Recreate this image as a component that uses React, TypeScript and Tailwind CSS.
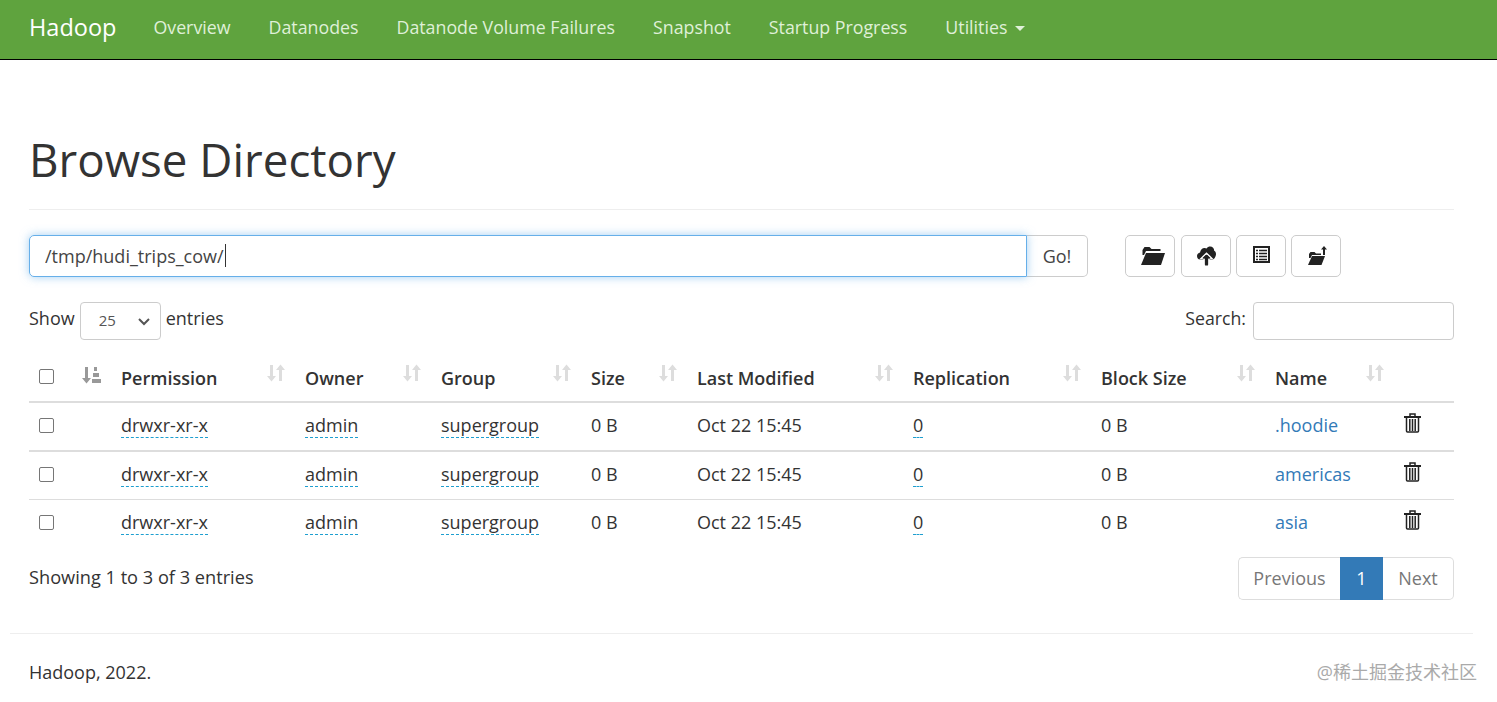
const navItems = ["Overview", "Datanodes", "Datanode Volume Failures", "Snapshot", "Startup Progress"];

const columns = [
  { label: "Permission", width: "w-[184px]" },
  { label: "Owner", width: "w-[136px]" },
  { label: "Group", width: "w-[150px]" },
  { label: "Size", width: "w-[106px]" },
  { label: "Last Modified", width: "w-[216px]" },
  { label: "Replication", width: "w-[188px]" },
  { label: "Block Size", width: "w-[174px]" },
  { label: "Name", width: "w-[129px]" },
];

const rows = [
  { name: ".hoodie", line: "h-[49px] border-b-2", pad: "pb-[3px]" },
  { name: "americas", line: "h-[48px] border-b", pad: "pb-[1px]" },
  { name: "asia", line: "h-[48px]", pad: "pb-[1px]" },
];

function FolderOpenIcon() {
  return (
    <svg width="24" height="18" viewBox="0 0 24 18" className="ml-[5px] fill-[#222]">
      <path d="M1.500 8V3l2-3h5l2 2h9v2H5L3 8z" />
      <path d="M5 6h19l-4 12H0z" />
    </svg>
  );
}

function CloudUploadIcon() {
  return (
    <svg width="19" height="22" viewBox="0 0 20 22">
      <path
        className="fill-[#222]"
        d="M4 15C1.500 15 0 13.200 0 11c0-2 1.400-3.500 3.200-3.800C3.600 4.500 5.500 2.500 8 2.500c.8 0 1.500.2 2.100.5C11 1.500 12.500 1 13.800 1c2.600 0 4.300 2 4.300 4.400 1.200.7 1.900 2 1.900 3.400 0 2.900-2 6.200-4.500 6.200z"
      />
      <path className="fill-[#222] stroke-white" strokeWidth="1.500" d="M10 8l6 6h-3.500v7h-5v-7H4z" />
      <path className="fill-[#222]" d="M10 9.500l4 4h-2.500V21h-3v-7.500H6z" />
    </svg>
  );
}

function ListAltIcon() {
  return (
    <svg width="17" height="17" viewBox="0 0 17 17" className="mb-[3px]">
      <rect width="17" height="17" className="fill-[#222]" />
      <rect x="2" y="2" width="13" height="13" className="fill-white" />
      <path className="stroke-[#222]" strokeWidth="1.500" d="M3 4.500h2m1 0h8M3 7.500h2m1 0h8M3 10.500h2m1 0h8M3 13.500h2m1 0h8" />
    </svg>
  );
}

function FolderUploadIcon() {
  return (
    <svg width="20" height="20" viewBox="0 0 20 20" className="ml-[3px] fill-[#222]">
      <path d="M1 12V8l1.500-2h4l1.500 1.500h5V9H4l-1.500 3z" />
      <path d="M4 10h13l-3.500 9H0z" />
      <path d="M16 0l3 3.500h-2V9h-2V3.500h-2z" />
    </svg>
  );
}

function TrashIcon() {
  return (
    <svg width="17" height="20" viewBox="0 0 17 20" className="mb-[7px] stroke-[#222] fill-none">
      <path strokeWidth="1.500" d="M6 3V1h5v2" />
      <path strokeWidth="2" d="M0 4h17" />
      <path strokeWidth="1.500" d="M2.500 5v13c0 .6.400 1 1 1h10c.6 0 1-.4 1-1V5" />
      <path strokeWidth="1.500" d="M5.800 6v12M8.500 6v12M11.200 6v12" />
    </svg>
  );
}

function SortIcon() {
  return (
    <svg width="18" height="18" viewBox="0 0 18 18" className="mb-[6px] fill-[#dddddd]">
      <path d="M3 1h3v11h3l-4.500 5.500L0 12h3z" />
      <path d="M12 17h3V6h3L13.500.5 9 6h3z" />
    </svg>
  );
}

function SortActiveIcon() {
  return (
    <svg width="19" height="18" viewBox="0 0 19 18" className="mb-[2px] fill-[#999]">
      <path d="M3 1h3v11h3l-4.500 5.500L0 12h3z" />
      <path d="M12 1h3v4h-3zM11 7h6v4h-6zM10 13h9v4h-9z" />
    </svg>
  );
}

function Checkbox() {
  return <input type="checkbox" className="m-0 block h-[15px] w-[15px] appearance-none rounded-[2px] border border-[#767676] bg-white" />;
}

function Dashed({ children }: { children: React.ReactNode }) {
  return <span className="inline-block border-b border-dashed border-b-[#1e9fd0] leading-[23px]">{children}</span>;
}

export default function App() {
  return (
    <div className="h-[702px] overflow-hidden bg-white font-['Open_Sans','Noto_Sans_CJK_SC',sans-serif] text-[18px] text-[#333]">
      <nav className="flex h-[60px] items-center border-b border-black bg-[#5fa33e] pb-[4px] pl-[29px] text-[17.8px]">
        <a className="mr-[37px] text-[23.5px] text-white">Hadoop</a>
        <ul className="flex items-center gap-[38px] text-[#dff0d8]">
          {navItems.map((item) => (
            <li key={item}>{item}</li>
          ))}
          <li className="flex items-center gap-[8px]">
            Utilities
            <span className="mt-[2px] border-x-[5px] border-t-[5px] border-x-transparent border-t-[#dff0d8]" />
          </li>
        </ul>
      </nav>

      <main className="pl-[29px] pr-[43px]">
        <h1 className="border-b border-[#eee] pb-[15px] pt-[64px] text-[45.7px] leading-[70px] text-[#333]">Browse Directory</h1>

        <div className="mt-[25px] flex h-[42px] items-stretch">
          <div className="relative w-[998px]">
            <input
              readOnly
              value="/tmp/hudi_trips_cow/"
              className="h-full w-full rounded-l-[5px] border border-[#66afe9] pl-[15px] text-[18px] text-[#444] shadow-[0_0_10px_rgba(102,175,233,0.6)] outline-none"
            />
            <span className="absolute left-[196px] top-[9px] h-[23px] w-px bg-[#333]" />
          </div>
          <button className="w-[61px] rounded-r-[5px] border border-l-0 border-[#ccc] text-[#444]">Go!</button>
          <div className="ml-[37px] flex gap-[5px]">
            <button className="flex w-[50px] items-center justify-center rounded-[5px] border border-[#ccc]">
              <FolderOpenIcon />
            </button>
            <button className="ml-px flex w-[50px] items-center justify-center rounded-[5px] border border-[#ccc]">
              <CloudUploadIcon />
            </button>
            <button className="flex w-[50px] items-center justify-center rounded-[5px] border border-[#ccc]">
              <ListAltIcon />
            </button>
            <button className="flex w-[50px] items-center justify-center rounded-[5px] border border-[#ccc]">
              <FolderUploadIcon />
            </button>
          </div>
        </div>

        <div className="mt-[24px] flex h-[39px] items-center justify-between">
          <div className="flex items-center">
            <span className="mb-[4px]">Show</span>
            <div className="relative mx-[5px] h-[38px] w-[81px]">
              <select className="h-full w-full appearance-none rounded-[4px] border border-[#ccc] bg-white pl-[18px] text-[15px] text-[#555]">
                <option>25</option>
              </select>
              <svg width="12" height="8" viewBox="0 0 12 8" className="absolute right-[11px] top-[16px] fill-none stroke-[#555]" strokeWidth="2">
                <path d="M1 1l5 5 5-5" />
              </svg>
            </div>
            <span className="mb-[4px]">entries</span>
          </div>
          <div className="flex items-center gap-[7px]">
            <span className="mb-[4px] text-[17.7px]">Search:</span>
            <input className="h-[38px] w-[201px] rounded-[4px] border border-[#ccc]" />
          </div>
        </div>

        <table className="mt-[11px] w-full table-fixed border-collapse">
          <thead>
            <tr className="h-[51px] border-b-2 border-[#ddd] text-left">
              <th className="w-[45px] pl-[10px] font-normal">
                <Checkbox />
              </th>
              <th className="w-[39px] pl-[8px] font-normal">
                <SortActiveIcon />
              </th>
              {columns.map((col) => (
                <th key={col.label} className={`${col.width} px-[8px] font-semibold`}>
                  <div className="flex items-center justify-between pr-[4px]">
                    <span className="mt-[5px]">{col.label}</span>
                    <SortIcon />
                  </div>
                </th>
              ))}
              <th />
            </tr>
          </thead>
          <tbody>
            {rows.map((row) => (
              <tr key={row.name} className={`border-[#ddd] ${row.line}`}>
                <td className={`pl-[10px] ${row.pad}`}>
                  <Checkbox />
                </td>
                <td />
                <td className={`px-[8px] ${row.pad}`}>
                  <Dashed>drwxr-xr-x</Dashed>
                </td>
                <td className={`px-[8px] ${row.pad}`}>
                  <Dashed>admin</Dashed>
                </td>
                <td className={`px-[8px] ${row.pad}`}>
                  <Dashed>supergroup</Dashed>
                </td>
                <td className={`px-[8px] ${row.pad}`}>0 B</td>
                <td className={`px-[8px] ${row.pad}`}>Oct 22 15:45</td>
                <td className={`px-[8px] ${row.pad}`}>
                  <Dashed>0</Dashed>
                </td>
                <td className={`px-[8px] ${row.pad}`}>0 B</td>
                <td className={`px-[8px] text-[#337ab7] ${row.pad}`}>{row.name}</td>
                <td className="pl-[8px]">
                  <TrashIcon />
                </td>
              </tr>
            ))}
          </tbody>
        </table>

        <div className="mt-[10px] flex items-center justify-between">
          <span className="mb-[2px] text-[18.2px]">Showing 1 to 3 of 3 entries</span>
          <div className="flex h-[43px] items-stretch">
            <a className="flex w-[102px] items-center justify-center rounded-l-[5px] border border-r-0 border-[#ddd] text-[#777]">Previous</a>
            <a className="flex w-[43px] items-center justify-center bg-[#337ab7] text-white">1</a>
            <a className="flex w-[71px] items-center justify-center rounded-r-[5px] border border-l-0 border-[#ddd] text-[#777]">Next</a>
          </div>
        </div>
      </main>

      <footer className="mx-[10px] mt-[33px] mr-[24px] flex items-center justify-between border-t border-[#eee] pl-[19px] pt-[25px]">
        <span>Hadoop, 2022.</span>
        <span className="mr-[-4px] text-[18px] text-[#aaa]">@稀土掘金技术社区</span>
      </footer>
    </div>
  );
}
